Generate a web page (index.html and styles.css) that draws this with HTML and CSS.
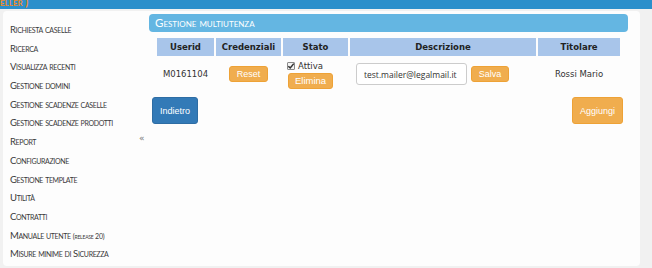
FILE: index.html
```html
<html lang="it">
<head>
<meta charset="UTF-8">
<title>Gestione multiutenza</title>
<link rel="stylesheet" href="styles.css">
</head>
<body>
<header class="topbar">
  <span class="topbar-user">eller )</span>
</header>
<div class="page">
  <div class="panel">
    <nav class="sidebar">
      <ul class="menu">
        <li>Richiesta caselle</li>
        <li>Ricerca</li>
        <li>Visualizza recenti</li>
        <li>Gestione domini</li>
        <li>Gestione scadenze caselle</li>
        <li>Gestione scadenze prodotti</li>
        <li>Report</li>
        <li>Configurazione</li>
        <li>Gestione template</li>
        <li>Utilità</li>
        <li>Contratti</li>
        <li>Manuale utente <span class="small">(release 20)</span></li>
        <li>Misure minime di Sicurezza</li>
      </ul>
    </nav>
    <div class="toggle"><span>&laquo;</span></div>
    <main class="content">
      <div class="title-bar">Gestione multiutenza</div>
      <table class="grid">
        <thead>
          <tr>
            <th class="c-user">Userid</th>
            <th class="c-cred">Credenziali</th>
            <th class="c-stato">Stato</th>
            <th class="c-desc">Descrizione</th>
            <th class="c-tit">Titolare</th>
          </tr>
        </thead>
        <tbody>
          <tr>
            <td>M0161104</td>
            <td><button class="btn btn-warn btn-sm">Reset</button></td>
            <td class="stato">
              <label class="check"><input type="checkbox" checked> Attiva</label>
              <button class="btn btn-warn btn-sm">Elimina</button>
            </td>
            <td class="desc">
              <input type="text" class="field" value="test.mailer@legalmail.it">
              <button class="btn btn-warn btn-sm">Salva</button>
            </td>
            <td>Rossi Mario</td>
          </tr>
        </tbody>
      </table>
      <div class="actions">
        <button class="btn btn-primary btn-lg">Indietro</button>
        <button class="btn btn-warn btn-lg">Aggiungi</button>
      </div>
    </main>
  </div>
</div>
</body>
</html>
```

FILE: styles.css
```css
*{box-sizing:border-box;margin:0;padding:0}
body{width:652px;height:268px;overflow:hidden;background:#f1f1f1;font-family:"DejaVu Sans",Verdana,sans-serif;color:#333}
.topbar{height:9px;background:#2b8fcb;overflow:hidden}
.topbar-user{display:block;margin-top:-5px;font-family:Lato,sans-serif;font-variant:small-caps;font-weight:bold;font-size:11px;line-height:13px;color:#f08a24}
.page{padding:2px 12px 0 3px}
.panel{display:flex;height:255px;background:#fdfdfd;border-radius:4px}
.sidebar{width:136px;padding-top:10px}
.menu{list-style:none}
.menu li{padding-left:7px;height:18.7px;line-height:18.7px;font-family:Lato,sans-serif;font-variant:small-caps;font-size:9.5px;letter-spacing:-0.35px;color:#3a3a3a;white-space:nowrap}
.menu .small{font-size:7px;letter-spacing:-0.2px}
.toggle{width:10px;padding-top:120px;font-family:"DejaVu Sans",sans-serif;font-size:9px;color:#777;line-height:14px}
.content{width:479px;padding-top:3px}
.title-bar{height:18px;line-height:18px;padding-left:6px;background:#64b6e2;border-radius:4px;font-family:Lato,sans-serif;font-variant:small-caps;font-size:11.5px;color:#fff}
.grid{width:467px;margin:4px 6px 0 6px;border-spacing:2px;font-size:8.5px}
.grid th{height:18px;background:#a8c5ea;font-weight:bold;color:#222;font-size:8.5px}
.c-user{width:57px}
.c-cred{width:65px}
.c-stato{width:65px}
.c-desc{width:186px}
.c-tit{width:82px}
.grid td{height:32px;text-align:center;vertical-align:middle;color:#333}
.grid .stato{text-align:left;padding:0 0 0 3px}
.check{display:flex;align-items:center;gap:3px;height:12px;margin:0 0 1px 0}
.check input{appearance:none;width:8px;height:8px;margin:0 0 0 1px;border:1px solid #8a8a8a;border-radius:1px;background:#f4f4f4 url("data:image/svg+xml;utf8,<svg xmlns='http://www.w3.org/2000/svg' viewBox='0 0 8 8'><path d='M1.3 4.2 L3.2 6 L6.8 1.6' fill='none' stroke='%23333' stroke-width='1.5'/></svg>") center/8px 8px no-repeat}
.grid .desc{text-align:left;padding:0 0 0 6px}
.field{width:111px;height:22px;padding:0 7px;border:1px solid #ccc;border-radius:3px;background:#fff;font-family:"Open Sans",sans-serif;font-size:8.5px;color:#333;vertical-align:middle}
.desc .btn{margin-left:1px;vertical-align:middle}
.btn{border:1px solid transparent;border-radius:3px;color:#fff;font-family:"Liberation Sans",Arial,sans-serif;cursor:pointer}
.btn-sm{height:16px;padding:0 7px;font-size:9px}
.stato .btn-sm{padding:0 6px;margin-left:2px;font-size:9.5px}
.btn-lg{height:27px;padding:0 7px;font-size:9px}
.btn-warn{background:#f0ad4e;border-color:#eea236}
.btn-primary{background:#337ab7;border-color:#2e6da4}
.actions{display:flex;justify-content:space-between;padding:5px 5px 0 3px}
```
